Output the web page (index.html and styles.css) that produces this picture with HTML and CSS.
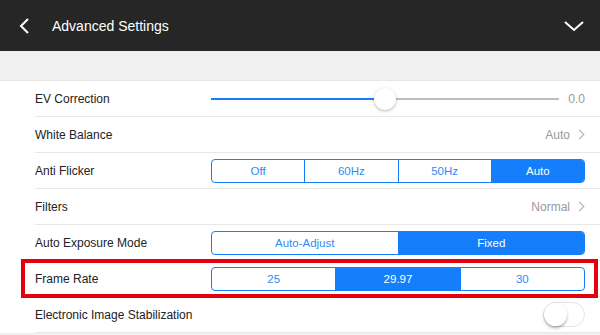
FILE: index.html
```html
<!DOCTYPE html>
<html lang="en">
<head>
  <meta charset="UTF-8" />
  <title>Advanced Settings</title>
  <link rel="stylesheet" href="styles.css">
</head>
<body>
  <div class="header">
    <svg class="back" width="12" height="16" viewBox="0 0 12 16"><path d="M10 1 L3 8 L10 15" fill="none" stroke="#fff" stroke-width="2"/></svg>
    <span class="title">Advanced Settings</span>
    <svg class="collapse" width="20" height="12" viewBox="0 0 20 12"><path d="M1 2 L10 10 L19 2" fill="none" stroke="#fff" stroke-width="2"/></svg>
  </div>
  <div class="band"></div>

  <div class="list">
    <div class="row">
      <span class="label">EV Correction</span>
      <div class="slider">
        <div class="track"><div class="fill"></div><div class="thumb"></div></div>
        <span class="value">0.0</span>
      </div>
    </div>

    <div class="row">
      <span class="label">White Balance</span>
      <span class="link">Auto <i class="chev"></i></span>
    </div>

    <div class="row">
      <span class="label">Anti Flicker</span>
      <div class="segments">
        <span>Off</span><span>60Hz</span><span>50Hz</span><span class="on">Auto</span>
      </div>
    </div>

    <div class="row">
      <span class="label">Filters</span>
      <span class="link">Normal <i class="chev"></i></span>
    </div>

    <div class="row">
      <span class="label">Auto Exposure Mode</span>
      <div class="segments">
        <span>Auto-Adjust</span><span class="on">Fixed</span>
      </div>
    </div>

    <div class="row marked">
      <span class="label">Frame Rate</span>
      <div class="segments">
        <span>25</span><span class="on">29.97</span><span>30</span>
      </div>
    </div>

    <div class="row">
      <span class="label">Electronic Image Stabilization</span>
      <div class="toggle"><div class="knob"></div></div>
    </div>
  </div>
</body>
</html>
```

FILE: styles.css
```css
body {
  margin: 0;
  width: 600px;
  height: 335px;
  overflow: hidden;
  background: #f0f0f0;
  font-family: "Liberation Sans", Arial, sans-serif;
}

.header {
  height: 51px;
  background: #262626;
  display: flex;
  align-items: center;
  padding: 0 16px 0 18px;
  box-sizing: border-box;
}

.back {
  margin-right: 22px;
}

.title {
  color: #fff;
  font-size: 14px;
  flex: 1;
}

.collapse {
  margin-top: 1px;
}

.band {
  height: 29px;
  background: #f0f0f0;
  border-bottom: 1px solid #e6e6e6;
}

.list {
  padding-left: 35px;
  background: #fff;
}

.row {
  position: relative;
  height: 36px;
  display: flex;
  align-items: center;
  justify-content: space-between;
  padding-right: 15px;
  border-bottom: 1px solid #e8e8e8;
  box-sizing: border-box;
}

.label {
  font-size: 12px;
  color: #222;
}

.slider {
  width: 374px;
  display: flex;
  align-items: center;
}

.track {
  position: relative;
  width: 349px;
  height: 2px;
  background: #bdbdbd;
}

.fill {
  width: 174px;
  height: 2px;
  background: #157efb;
}

.thumb {
  position: absolute;
  left: 163px;
  top: -10px;
  width: 22px;
  height: 22px;
  border-radius: 50%;
  background: #fff;
  box-shadow: 0 1px 3px rgba(0, 0, 0, 0.3);
}

.value {
  margin-left: 9px;
  font-size: 12px;
  color: #999;
}

.link {
  font-size: 12px;
  color: #999;
  display: flex;
  align-items: center;
}

.chev {
  display: inline-block;
  width: 6px;
  height: 6px;
  border-top: 1px solid #aaa;
  border-right: 1px solid #aaa;
  transform: rotate(45deg);
  margin: 0 2px 0 6px;
}

.segments {
  width: 374px;
  height: 24px;
  display: flex;
  border: 1px solid #157efb;
  border-radius: 4px;
  overflow: hidden;
  box-sizing: border-box;
}

.segments span {
  flex: 1;
  display: flex;
  align-items: center;
  justify-content: center;
  font-size: 11.5px;
  color: #2f8af8;
  border-left: 1px solid #157efb;
}

.segments span:first-child {
  border-left: none;
}

.segments span.on {
  background: #157efb;
  color: #fff;
}

.marked::before {
  content: "";
  position: absolute;
  left: -14px;
  right: 2px;
  top: -2px;
  bottom: -2px;
  border: 4px solid #e3000f;
}

.toggle {
  width: 42px;
  height: 25px;
  border-radius: 13px;
  border: 1px solid #e3e3e3;
  box-sizing: border-box;
  background: #fff;
  position: relative;
}

.knob {
  position: absolute;
  left: 0;
  top: 0;
  width: 23px;
  height: 23px;
  border-radius: 50%;
  background: #fff;
  box-shadow: 0 2px 3px rgba(0, 0, 0, 0.3);
}
```
